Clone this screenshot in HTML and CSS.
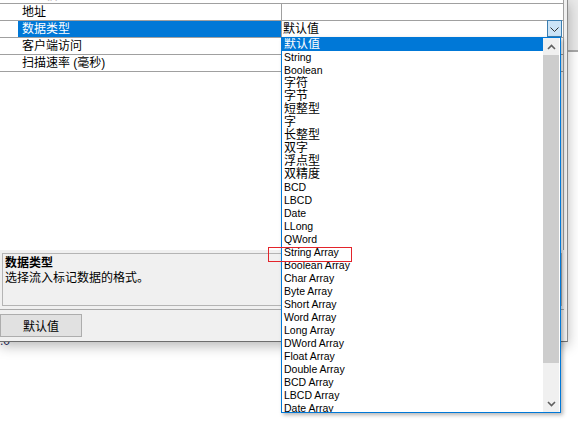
FILE: index.html
```html
<!DOCTYPE html>
<html lang="zh">
<head>
<meta charset="utf-8">
<title>属性</title>
<link rel="stylesheet" href="styles.css">
</head>
<body>
<div class="under">.0</div>
<div class="behind"></div>
<div class="window">
  <div class="grid">
    <div class="row cat"><div class="name">常规信息</div></div>
    <div class="row"><div class="name">地址</div><div class="value"></div></div>
    <div class="row sel"><div class="name">数据类型</div><div class="value"><span>默认值</span><span class="ddbtn"><svg width="9" height="5" viewBox="0 0 9 5"><path d="M0.5 0.5 L4.5 4.5 L8.5 0.5" fill="none" stroke="#333" stroke-width="1"/></svg></span></div></div>
    <div class="row"><div class="name">客户端访问</div><div class="value"></div></div>
    <div class="row"><div class="name">扫描速率 (毫秒)</div><div class="value"></div></div>
  </div>
  <div class="desc">
    <div class="desc-title">数据类型</div>
    <div class="desc-text">选择流入标记数据的格式。</div>
  </div>
  <div class="sep"></div>
  <div class="btnbar"><button class="btn">默认值</button></div>
</div>
<div class="dropdown">
  <div class="list">
    <div class="item zh on">默认值</div>
    <div class="item">String</div>
    <div class="item">Boolean</div>
    <div class="item zh">字符</div>
    <div class="item zh">字节</div>
    <div class="item zh">短整型</div>
    <div class="item zh">字</div>
    <div class="item zh">长整型</div>
    <div class="item zh">双字</div>
    <div class="item zh">浮点型</div>
    <div class="item zh">双精度</div>
    <div class="item">BCD</div>
    <div class="item">LBCD</div>
    <div class="item">Date</div>
    <div class="item">LLong</div>
    <div class="item">QWord</div>
    <div class="item">String Array</div>
    <div class="item">Boolean Array</div>
    <div class="item">Char Array</div>
    <div class="item">Byte Array</div>
    <div class="item">Short Array</div>
    <div class="item">Word Array</div>
    <div class="item">Long Array</div>
    <div class="item">DWord Array</div>
    <div class="item">Float Array</div>
    <div class="item">Double Array</div>
    <div class="item">BCD Array</div>
    <div class="item">LBCD Array</div>
    <div class="item">Date Array</div>
  </div>
  <div class="sbar">
    <div class="sbtn"><svg width="9" height="6" viewBox="0 0 9 6"><path d="M1 5 L4.5 1.5 L8 5" fill="none" stroke="#606060" stroke-width="1.6"/></svg></div>
    <div class="thumb"></div>
    <div class="track"></div>
    <div class="sbtn"><svg width="9" height="6" viewBox="0 0 9 6"><path d="M1 1 L4.5 4.5 L8 1" fill="none" stroke="#606060" stroke-width="1.6"/></svg></div>
  </div>
</div>
<div class="redbox"></div>
</body>
</html>
```
FILE: styles.css
```css
* { box-sizing: border-box; }
html, body {
  margin: 0;
  padding: 0;
  width: 578px;
  height: 440px;
  overflow: hidden;
  background: #ffffff;
  font-family: "Liberation Sans", "Noto Sans CJK SC", sans-serif;
  color: #000;
}
.under {
  position: absolute;
  left: 0;
  top: 334px;
  font-size: 12px;
  color: #1c2a5c;
}
.behind {
  position: absolute;
  left: 568px;
  top: 0;
  width: 10px;
  height: 52px;
  background: #e9e9e9;
  border-bottom: 1px solid #a9a9a9;
  box-shadow: 0 -4px 0 -3px #a9a9a9 inset;
}
.window {
  position: relative;
  width: 568px;
  height: 342px;
  background: #f0f0f0;
  border-right: 1px solid #8c8c8c;
  border-bottom: 1px solid #6e6e6e;
  box-shadow: 0 4px 12px rgba(0, 0, 0, 0.28);
  display: flex;
  flex-direction: column;
}
.grid {
  width: 564px;
  height: 250px;
  background: #fff;
  border-right: 1px solid #a0a0a0;
  overflow: hidden;
  font-size: 12px;
}
.row {
  display: flex;
  height: 17px;
  border-bottom: 1px solid #a0a0a0;
}
.row.cat { margin-top: -13px; font-weight: bold; }
.name {
  margin-left: 18px;
  width: 263px;
  padding-left: 4px;
  line-height: 16px;
  white-space: nowrap;
}
.value {
  flex: 1;
  border-left: 1px solid #a0a0a0;
  padding-left: 1px;
  line-height: 16px;
  display: flex;
  justify-content: space-between;
}
.sel .name { background: #0078d7; color: #fff; }
.ddbtn {
  width: 15px;
  height: 17px;
  margin-top: -1px;
  margin-right: 1px;
  background: #cce4f7;
  border: 1px solid #3c7fb1;
  display: flex;
  align-items: center;
  justify-content: center;
  padding-top: 1px;
}
.ddbtn svg { display: block; }
.desc {
  margin: 3px 2px 0 2px;
  width: 560px;
  height: 53px;
  border: 1px solid #b4b4b4;
  padding: 2px 2px;
  font-size: 12px;
  line-height: 15px;
}
.desc-title { font-weight: bold; }
.sep {
  margin-top: 3px;
  height: 1px;
  width: 564px;
  background: #a9a9a9;
}
.btnbar { padding-top: 4px; }
.btn {
  display: block;
  width: 82px;
  height: 23px;
  margin: 0;
  padding: 0;
  background: #e1e1e1;
  border: 1px solid #adadad;
  font-family: "Liberation Sans", "Noto Sans CJK SC", sans-serif;
  font-size: 12px;
  color: #000;
}
.dropdown {
  position: absolute;
  left: 281px;
  top: 37px;
  width: 280px;
  height: 376px;
  background: #fff;
  border: 1px solid #0078d7;
  box-shadow: 2px 2px 4px rgba(0, 0, 0, 0.3);
  display: flex;
}
.list {
  flex: 1;
  overflow: hidden;
}
.item {
  height: 13px;
  line-height: 13px;
  padding-left: 2px;
  font-size: 10.5px;
  white-space: nowrap;
}
.item.zh { font-size: 12px; }
.item.on { background: #0078d7; color: #fff; }
.sbar {
  width: 16px;
  margin-right: 1px;
  background: #f0f0f0;
  display: flex;
  flex-direction: column;
}
.sbtn {
  height: 17px;
  display: flex;
  align-items: center;
  justify-content: center;
}
.thumb {
  height: 308px;
  background: #cdcdcd;
}
.track { flex: 1; }
.redbox {
  position: absolute;
  left: 268px;
  top: 247px;
  width: 84px;
  height: 15px;
  border: 1px solid #e3242b;
}
```
